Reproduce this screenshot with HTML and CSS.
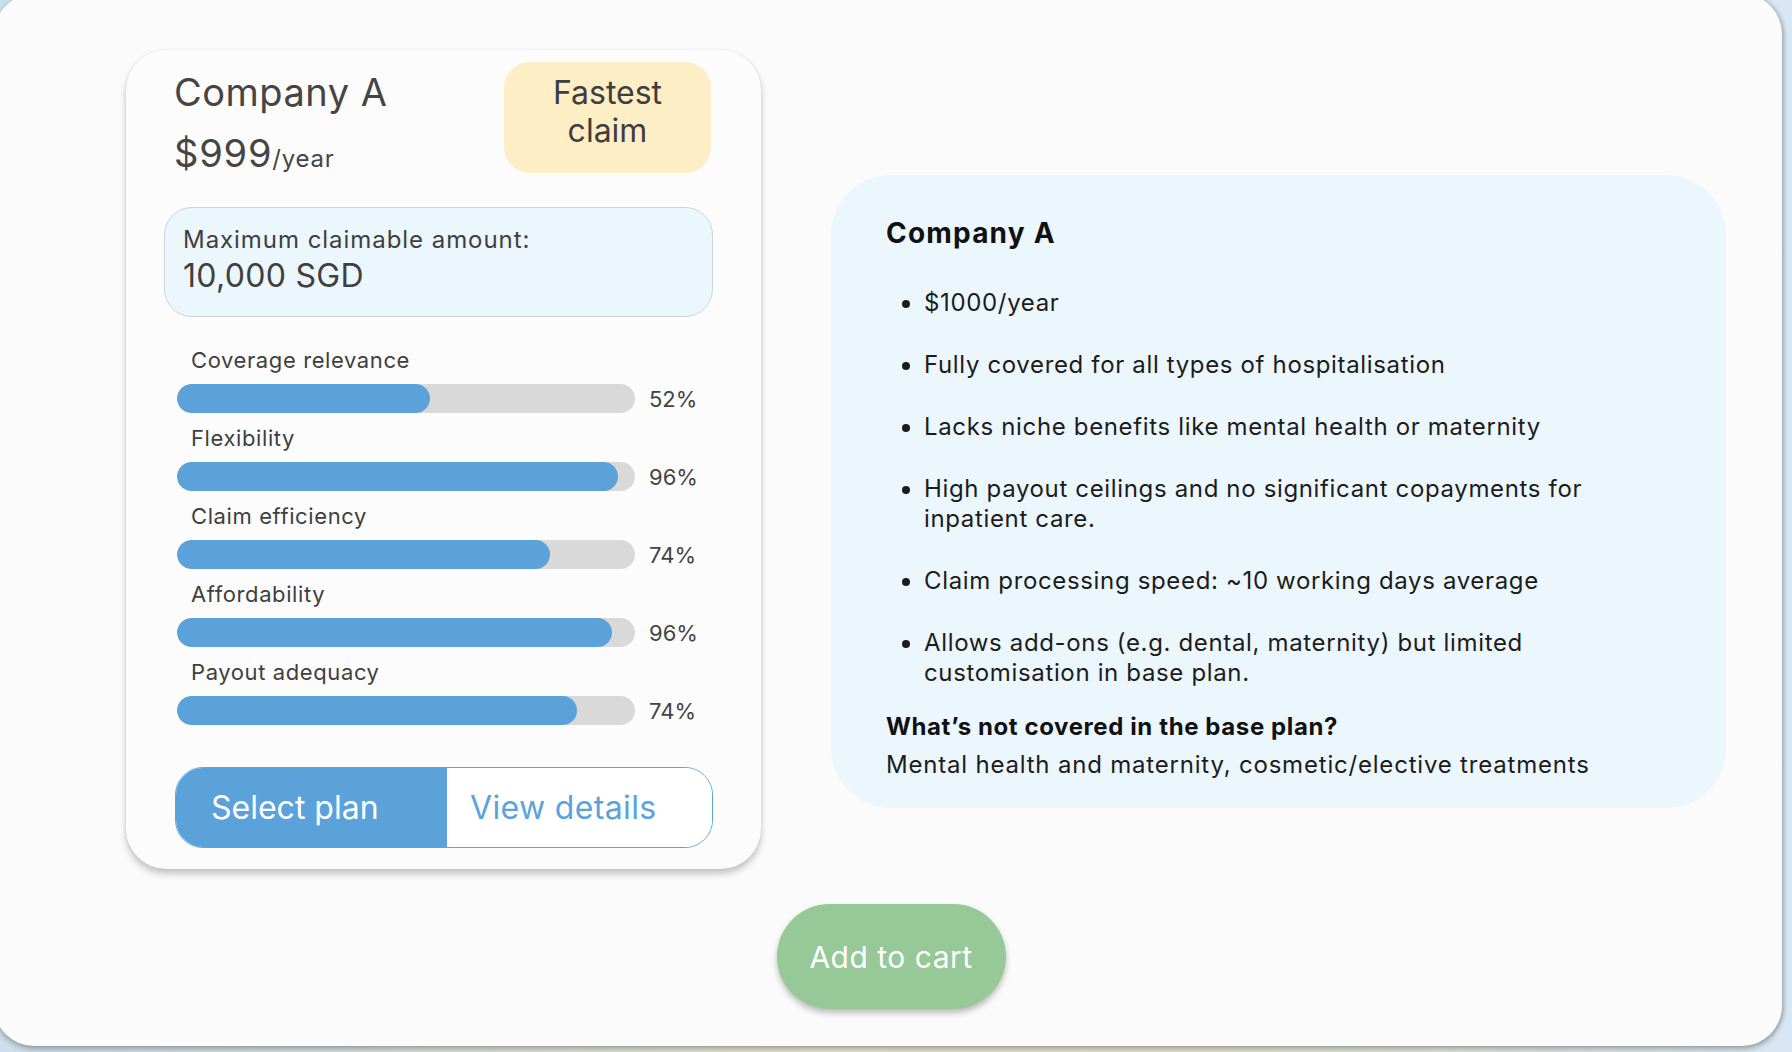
FILE: index.html
```html
<!DOCTYPE html>
<html lang="en">
<head>
<meta charset="utf-8">
<title>Plan comparison</title>
<link rel="stylesheet" href="styles.css">
</head>
<body>
<div class="screen">
  <div class="row">
    <section class="card">
      <div class="card-head">
        <div class="head-text">
          <div class="company">Company A</div>
          <div class="price">$999<span class="per">/year</span></div>
        </div>
        <div class="badge">Fastest<br>claim</div>
      </div>
      <div class="maxbox">
        <div class="max-label">Maximum claimable amount:</div>
        <div class="max-value">10,000 SGD</div>
      </div>
      <div class="metrics">
        <div class="metric">
          <div class="metric-label">Coverage relevance</div>
          <div class="bar-row">
            <div class="bar"><div class="fill" style="width:55.2%"></div></div>
            <span class="pct">52%</span>
          </div>
        </div>
        <div class="metric">
          <div class="metric-label">Flexibility</div>
          <div class="bar-row">
            <div class="bar"><div class="fill" style="width:96.3%"></div></div>
            <span class="pct">96%</span>
          </div>
        </div>
        <div class="metric">
          <div class="metric-label">Claim efficiency</div>
          <div class="bar-row">
            <div class="bar"><div class="fill" style="width:81.4%"></div></div>
            <span class="pct">74%</span>
          </div>
        </div>
        <div class="metric">
          <div class="metric-label">Affordability</div>
          <div class="bar-row">
            <div class="bar"><div class="fill" style="width:95%"></div></div>
            <span class="pct">96%</span>
          </div>
        </div>
        <div class="metric">
          <div class="metric-label">Payout adequacy</div>
          <div class="bar-row">
            <div class="bar"><div class="fill" style="width:87.3%"></div></div>
            <span class="pct">74%</span>
          </div>
        </div>
      </div>
      <div class="btn-group">
        <button class="btn-select">Select plan</button>
        <button class="btn-view">View details</button>
      </div>
    </section>

    <section class="details">
      <h2 class="details-title">Company A</h2>
      <ul class="details-list">
        <li>$1000/year</li>
        <li>Fully covered for all types of hospitalisation</li>
        <li>Lacks niche benefits like mental health or maternity</li>
        <li>High payout ceilings and no significant copayments for inpatient care.</li>
        <li>Claim processing speed: ~10 working days average</li>
        <li>Allows add-ons (e.g. dental, maternity) but limited customisation in base plan.</li>
      </ul>
      <h3 class="not-covered-title">What’s not covered in the base plan?</h3>
      <p class="not-covered">Mental health and maternity, cosmetic/elective treatments</p>
    </section>
  </div>
  <div class="cart-wrap">
    <button class="btn-cart">Add to cart</button>
  </div>
</div>
</body>
</html>
```

FILE: styles.css
```css
* {
  box-sizing: border-box;
}

html, body {
  margin: 0;
  padding: 0;
  width: 1792px;
  height: 1052px;
  overflow: hidden;
}

body {
  font-family: Inter, "Noto Sans", "Liberation Sans", sans-serif;
  background: linear-gradient(90deg, #cddfee 0%, #e6e6cf 45%, #e4e6d2 70%, #d8e7f4 100%);
}

.screen {
  width: 1788px;
  height: 1052px;
  margin: -6px 0 0 -6px;
  padding: 56px 0 0 132px;
  background: #fbfbfb;
  border-radius: 40px;
  box-shadow: 0 3px 6px rgba(0, 0, 0, 0.28), 2px 0 4px rgba(0, 0, 0, 0.15);
}

.row {
  display: flex;
  align-items: flex-start;
  gap: 70px;
}

/* ---------- card ---------- */
.card {
  width: 635px;
  padding: 12px 48px 21px 38px;
  background: #fcfcfc;
  border-radius: 40px;
  box-shadow: 0 5px 7px rgba(0, 0, 0, 0.22), 0 0 2px rgba(0, 0, 0, 0.12);
  color: #454545;
}

.card-head {
  display: flex;
  justify-content: space-between;
  align-items: flex-start;
  padding: 0 2px 0 10px;
}

.company {
  margin-top: 7px;
  font-size: 38px;
  line-height: 46px;
  letter-spacing: 0.5px;
}

.price {
  margin-top: 15px;
  font-size: 38px;
  line-height: 46px;
  letter-spacing: 0.8px;
}

.per {
  font-size: 24px;
  line-height: 1;
  letter-spacing: 0.8px;
}

.badge {
  width: 207px;
  padding: 12px 0 23px;
  background: #feeec6;
  border-radius: 26px;
  text-align: center;
  font-size: 32px;
  line-height: 38px;
  color: #3e3e3e;
}

.maxbox {
  margin-top: 31px;
  height: 110px;
  padding: 17px 18px 0;
  background: #ecf6fd;
  border: 1px solid #c9d6df;
  border-radius: 28px;
}

.max-label {
  font-size: 24px;
  line-height: 30px;
  letter-spacing: 0.95px;
  color: #3f3f3f;
}

.max-value {
  margin-top: 3px;
  font-size: 32px;
  line-height: 36px;
  letter-spacing: 0.3px;
  color: #3f3f3f;
}

.metrics {
  margin-top: 30px;
  padding-left: 13px;
  display: flex;
  flex-direction: column;
  gap: 12px;
}

.metric-label {
  padding-left: 14px;
  font-size: 22px;
  line-height: 26px;
  letter-spacing: 0.6px;
  color: #3f3f3f;
}

.bar-row {
  margin-top: 11px;
  display: flex;
  align-items: center;
  gap: 14px;
}

.bar {
  width: 458px;
  height: 29px;
  background: #d9d9d9;
  border-radius: 15px;
  overflow: hidden;
}

.fill {
  height: 100%;
  background: #5ba1da;
  border-radius: 15px;
}

.pct {
  font-size: 22px;
  line-height: 26px;
  color: #444;
}

.btn-group {
  margin-top: 42px;
  margin-left: 11px;
  display: flex;
  height: 81px;
  border: 1.5px solid #5ba3dc;
  border-radius: 28px;
  overflow: hidden;
}

.btn-group button {
  font-family: inherit;
  font-size: 32px;
  line-height: 38px;
  border: 0;
  margin: 0;
  text-align: left;
  cursor: pointer;
}

.btn-select {
  width: 271px;
  padding: 0 0 0 35px;
  background: #5ba2db;
  color: #ffffff;
}

.btn-view {
  flex: 1;
  padding: 0 0 0 23px;
  background: #ffffff;
  color: #5ba3dc;
  letter-spacing: 0.35px;
}

/* ---------- details panel ---------- */
.details {
  width: 895px;
  margin-top: 125px;
  padding: 41px 55px 28px;
  background: #ecf6fd;
  border-radius: 60px;
  color: #1c1c1c;
}

.details-title {
  margin: 0;
  font-size: 28px;
  line-height: 34px;
  font-weight: 700;
  letter-spacing: 1.2px;
  color: #111;
}

.details-list {
  margin: 38px 0 0;
  padding-left: 38px;
  font-size: 24px;
  line-height: 30px;
  letter-spacing: 0.65px;
}

.details-list li + li {
  margin-top: 32px;
}

.not-covered-title {
  margin: 24px 0 0;
  font-size: 24px;
  line-height: 30px;
  font-weight: 700;
  letter-spacing: 0.6px;
  color: #111;
}

.not-covered {
  margin: 8px 0 0;
  font-size: 24px;
  line-height: 30px;
  letter-spacing: 0.8px;
}

/* ---------- cart ---------- */
.cart-wrap {
  display: flex;
  justify-content: center;
  margin: 35px 0 0 -126px;
}

.btn-cart {
  width: 229px;
  height: 105px;
  border: 0;
  border-radius: 53px;
  background: #97c897;
  color: #ffffff;
  font-family: inherit;
  font-size: 30px;
  letter-spacing: 0.5px;
  box-shadow: 0 4px 6px rgba(0, 0, 0, 0.25);
  cursor: pointer;
}
```
